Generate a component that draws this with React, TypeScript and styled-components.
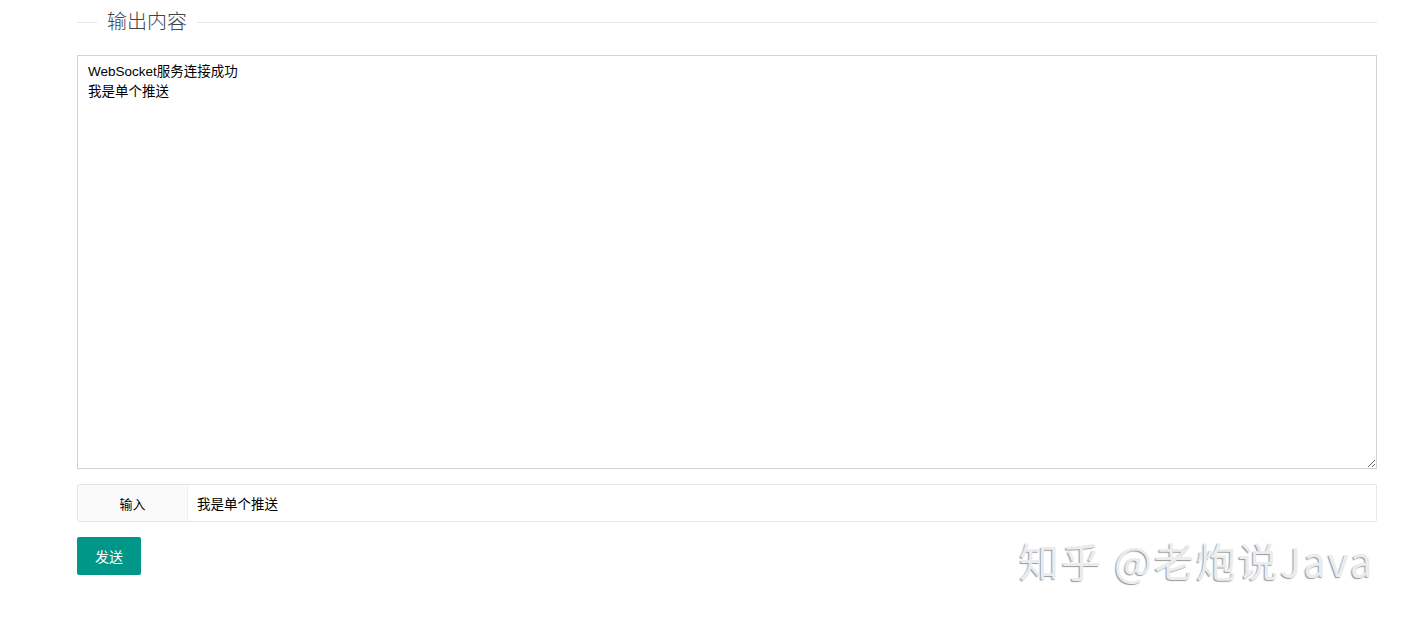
import React from "react";
import styled, { createGlobalStyle } from "styled-components";

const GlobalStyle = createGlobalStyle`
  body {
    margin: 0;
    background: #fff;
    font-family: "Liberation Sans", "Noto Sans CJK SC", sans-serif;
    color: #333;
  }
`;

const Page = styled.div`
  position: relative;
  width: 1407px;
  height: 618px;
  overflow: hidden;
  padding: 8px 30px 0 77px;
  box-sizing: border-box;
`;

const FieldTitle = styled.div`
  display: flex;
  align-items: center;
  height: 28px;
`;

const Line = styled.span<{ $grow?: boolean }>`
  height: 1px;
  background: #e6e6e6;
  width: ${(p) => (p.$grow ? "auto" : "20px")};
  flex: ${(p) => (p.$grow ? 1 : "none")};
`;

const Legend = styled.span`
  padding: 0 10px;
  font-size: 20px;
  font-weight: 300;
  line-height: 28px;
  color: #444;
`;

const Output = styled.textarea`
  display: block;
  width: 100%;
  height: 414px;
  margin-top: 19px;
  box-sizing: border-box;
  border: 1px solid #d2d2d2;
  padding: 6px 10px;
  font-family: "Liberation Sans", "Noto Sans CJK SC", sans-serif;
  font-size: 13.5px;
  line-height: 20px;
  color: #000;
  outline: none;
  resize: vertical;
  background: #fff;
`;

const InputRow = styled.div`
  display: flex;
  height: 38px;
  margin-top: 15px;
  border: 1px solid #e6e6e6;
  border-radius: 2px;
  box-sizing: border-box;
`;

const Label = styled.label`
  width: 109px;
  flex: none;
  display: flex;
  align-items: center;
  justify-content: center;
  background: #fafafa;
  border-right: 1px solid #eee;
  font-size: 13px;
  color: #000;
`;

const TextInput = styled.input`
  flex: 1;
  border: none;
  outline: none;
  padding: 0 9px;
  font-family: "Liberation Sans", "Noto Sans CJK SC", sans-serif;
  font-size: 13.5px;
  color: #000;
  background: #fff;
`;

const ButtonRow = styled.div`
  margin-top: 15px;
`;

const SendButton = styled.button`
  height: 38px;
  width: 64px;
  border: none;
  border-radius: 2px;
  background: #009688;
  color: #fff;
  font-family: "Liberation Sans", "Noto Sans CJK SC", sans-serif;
  font-size: 14px;
  cursor: pointer;
`;

const Watermark = styled.div`
  position: absolute;
  left: 1019px;
  top: 532px;
  font-family: "Noto Sans CJK SC", "Liberation Sans", sans-serif;
  font-size: 40px;
  letter-spacing: 2px;
  line-height: 56px;
  color: #ececec;
  text-shadow: -1px 1px 1px #999;
  white-space: nowrap;
  pointer-events: none;
`;

const App: React.FC = () => {
  return (
    <>
      <GlobalStyle />
      <Page>
        <FieldTitle>
          <Line />
          <Legend>输出内容</Legend>
          <Line $grow />
        </FieldTitle>
        <Output readOnly value={"WebSocket服务连接成功\n我是单个推送"} />
        <InputRow>
          <Label>输入</Label>
          <TextInput defaultValue="我是单个推送" />
        </InputRow>
        <ButtonRow>
          <SendButton>发送</SendButton>
        </ButtonRow>
        <Watermark>知乎 @老炮说Java</Watermark>
      </Page>
    </>
  );
};

export default App;
